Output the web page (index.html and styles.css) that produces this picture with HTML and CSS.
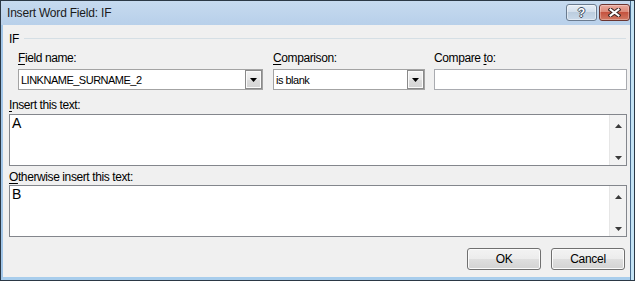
FILE: index.html
```html
<!DOCTYPE html>
<html>
<head>
<meta charset="utf-8">
<link rel="stylesheet" href="styles.css">
</head>
<body>
<div class="window">
  <div class="frame">
    <div class="titlebar">
      <span class="title">Insert Word Field: IF</span>
      <div class="caption">
        <div class="cbtn help"><span class="qmark">?</span></div>
        <div class="cbtn close">
          <svg width="13" height="9" viewBox="0 0 13 9">
            <path d="M2.5 1.5 L10.5 7.5 M10.5 1.5 L2.5 7.5" stroke="#3b2522" stroke-width="4" stroke-linecap="square" fill="none"/>
            <path d="M2.5 1.5 L10.5 7.5 M10.5 1.5 L2.5 7.5" stroke="#ffffff" stroke-width="2" stroke-linecap="square" fill="none"/>
          </svg>
        </div>
      </div>
    </div>
    <div class="client">
      <div class="group">
        <span class="group-label">IF</span>
        <span class="group-line"></span>
      </div>
      <div class="fields">
        <div class="field f1">
          <div class="lbl"><u>F</u>ield name:</div>
          <div class="combo">
            <span class="combo-text">LINKNAME_SURNAME_2</span>
            <span class="drop"><svg width="7" height="4" viewBox="0 0 7 4"><path d="M0 0 H7 L3.5 4 Z" fill="#000"/></svg></span>
          </div>
        </div>
        <div class="field f2">
          <div class="lbl"><u>C</u>omparison:</div>
          <div class="combo">
            <span class="combo-text">is blank</span>
            <span class="drop"><svg width="7" height="4" viewBox="0 0 7 4"><path d="M0 0 H7 L3.5 4 Z" fill="#000"/></svg></span>
          </div>
        </div>
        <div class="field f3">
          <div class="lbl">Compare <u>t</u>o:</div>
          <div class="input"></div>
        </div>
      </div>
      <div class="lbl lbl-insert"><u>I</u>nsert this text:</div>
      <div class="textbox">
        <div class="tb-text">A</div>
        <div class="scroll">
          <svg width="7" height="4" viewBox="0 0 7 4"><path d="M3.5 0 L7 4 H0 Z" fill="#3a3a3a"/></svg>
          <svg width="7" height="4" viewBox="0 0 7 4"><path d="M0 0 H7 L3.5 4 Z" fill="#3a3a3a"/></svg>
        </div>
      </div>
      <div class="lbl lbl-other"><u>O</u>therwise insert this text:</div>
      <div class="textbox">
        <div class="tb-text">B</div>
        <div class="scroll">
          <svg width="7" height="4" viewBox="0 0 7 4"><path d="M3.5 0 L7 4 H0 Z" fill="#3a3a3a"/></svg>
          <svg width="7" height="4" viewBox="0 0 7 4"><path d="M0 0 H7 L3.5 4 Z" fill="#3a3a3a"/></svg>
        </div>
      </div>
      <div class="buttons">
        <div class="btn">OK</div>
        <div class="btn">Cancel</div>
      </div>
    </div>
  </div>
</div>
</body>
</html>
```
FILE: styles.css
```css
html, body {
  margin: 0;
  padding: 0;
  background: #ffffff;
}

.window {
  width: 635px;
  height: 281px;
  box-sizing: border-box;
  border: 1px solid #2b3845;
  background: #c4e3f4;
  display: flex;
}

.frame {
  width: 630px;
  box-sizing: border-box;
  border-right: 1px solid #46698c;
  display: flex;
  flex-direction: column;
}

.titlebar {
  height: 24px;
  flex: none;
  box-sizing: border-box;
  padding-left: 6px;
  display: flex;
  justify-content: space-between;
  align-items: flex-start;
  background: linear-gradient(#c6daef, #b8d0ea);
}

.title {
  font-family: "Liberation Sans", Arial, sans-serif;
  font-size: 12px;
  line-height: 15px;
  margin-top: 5px;
  color: #1a1a1a;
  letter-spacing: -0.2px;
}

.caption {
  display: flex;
  gap: 2px;
  margin-top: 3px;
}

.cbtn {
  width: 31px;
  height: 17px;
  box-sizing: border-box;
  border: 1px solid #6a7b8f;
  border-radius: 3px;
  display: flex;
  align-items: center;
  justify-content: center;
}

.help {
  background: linear-gradient(#e6eef7 0%, #d3dfec 45%, #bccddf 50%, #c9d9ea 100%);
  box-shadow: inset 0 0 0 1px rgba(255, 255, 255, 0.45);
}

.qmark {
  font-family: "Liberation Sans", Arial, sans-serif;
  font-weight: bold;
  font-size: 12px;
  line-height: 12px;
  color: #ffffff;
  text-shadow: 1px 0 0 #3d4d60, -1px 0 0 #3d4d60, 0 1px 0 #3d4d60, 0 -1px 0 #3d4d60;
}

.close {
  border-color: #6b3530;
  background: linear-gradient(#eaa99d 0%, #dc8a79 45%, #c5533f 50%, #d27a64 100%);
  box-shadow: inset 0 0 0 1px rgba(255, 255, 255, 0.3);
}

.close svg {
  display: block;
}

.client {
  flex: 1;
  box-sizing: border-box;
  border-left: 2px solid #a2c6e8;
  border-bottom: 3px solid #a8cdec;
  background: #f0f0f0;
  padding: 7px 3px 7px 6px;
  display: flex;
  flex-direction: column;
  font-family: "Liberation Sans", Arial, sans-serif;
  font-size: 12px;
  color: #000;
}

.group {
  display: flex;
  height: 15px;
  line-height: 15px;
  letter-spacing: -0.4px;
}

.group-line {
  flex: 1;
  height: 1px;
  margin: 6px 1px 0 5px;
  background: #d5dfe5;
}

.fields {
  display: flex;
  margin: 4px 0 0 9px;
}

.f1 { width: 245px; margin-right: 10px; }
.f2 { width: 152px; margin-right: 9px; }
.f3 { width: 193px; }

.lbl {
  line-height: 15px;
  height: 15px;
  letter-spacing: -0.4px;
  white-space: nowrap;
}

.lbl u {
  text-underline-offset: 2px;
}

.field .lbl {
  margin-bottom: 3px;
}

.combo {
  height: 21px;
  box-sizing: border-box;
  border: 1px solid #a3a3a3;
  background: #fff;
  display: flex;
  align-items: center;
}

.combo-text {
  flex: 1;
  padding-left: 2px;
  font-size: 11px;
  letter-spacing: -0.5px;
  white-space: nowrap;
}

.drop {
  width: 17px;
  height: 19px;
  box-sizing: border-box;
  border: 1px solid #8a8a8a;
  background: linear-gradient(#f4f4f4, #e8e8e8 50%, #dcdcdc 50%, #d4d4d4);
  box-shadow: inset 0 0 0 1px #fafafa;
  display: flex;
  align-items: center;
  justify-content: center;
}

.drop svg { display: block; }

.input {
  height: 21px;
  box-sizing: border-box;
  border: 1px solid #a9abb0;
  background: #fff;
}

.lbl-insert { margin-top: 8px; }
.lbl-other { margin-top: 4px; }

.textbox {
  height: 52px;
  box-sizing: border-box;
  border: 1px solid #83868c;
  background: #fff;
  display: flex;
  margin-top: 1px;
}

.lbl-other + .textbox { margin-top: 0; }

.tb-text {
  flex: 1;
  padding-left: 2px;
  font-size: 14px;
  line-height: 16px;
}

.scroll {
  width: 17px;
  box-sizing: border-box;
  background: #f2f2f2;
  border-left: 1px solid #e6e6e6;
  display: flex;
  flex-direction: column;
  align-items: center;
  justify-content: space-between;
  padding: 9px 0 5px 0;
}

.scroll svg { display: block; }

.buttons {
  display: flex;
  justify-content: flex-end;
  gap: 10px;
  margin-top: 11px;
  padding-right: 2px;
}

.btn {
  width: 74px;
  height: 22px;
  box-sizing: border-box;
  border: 1px solid #707070;
  border-radius: 3px;
  background: linear-gradient(#f3f3f3, #ececec 50%, #dfdfdf 50%, #d3d3d3);
  box-shadow: inset 0 0 0 1px #fbfbfb;
  display: flex;
  align-items: center;
  justify-content: center;
  line-height: 15px;
  letter-spacing: -0.3px;
}
```
